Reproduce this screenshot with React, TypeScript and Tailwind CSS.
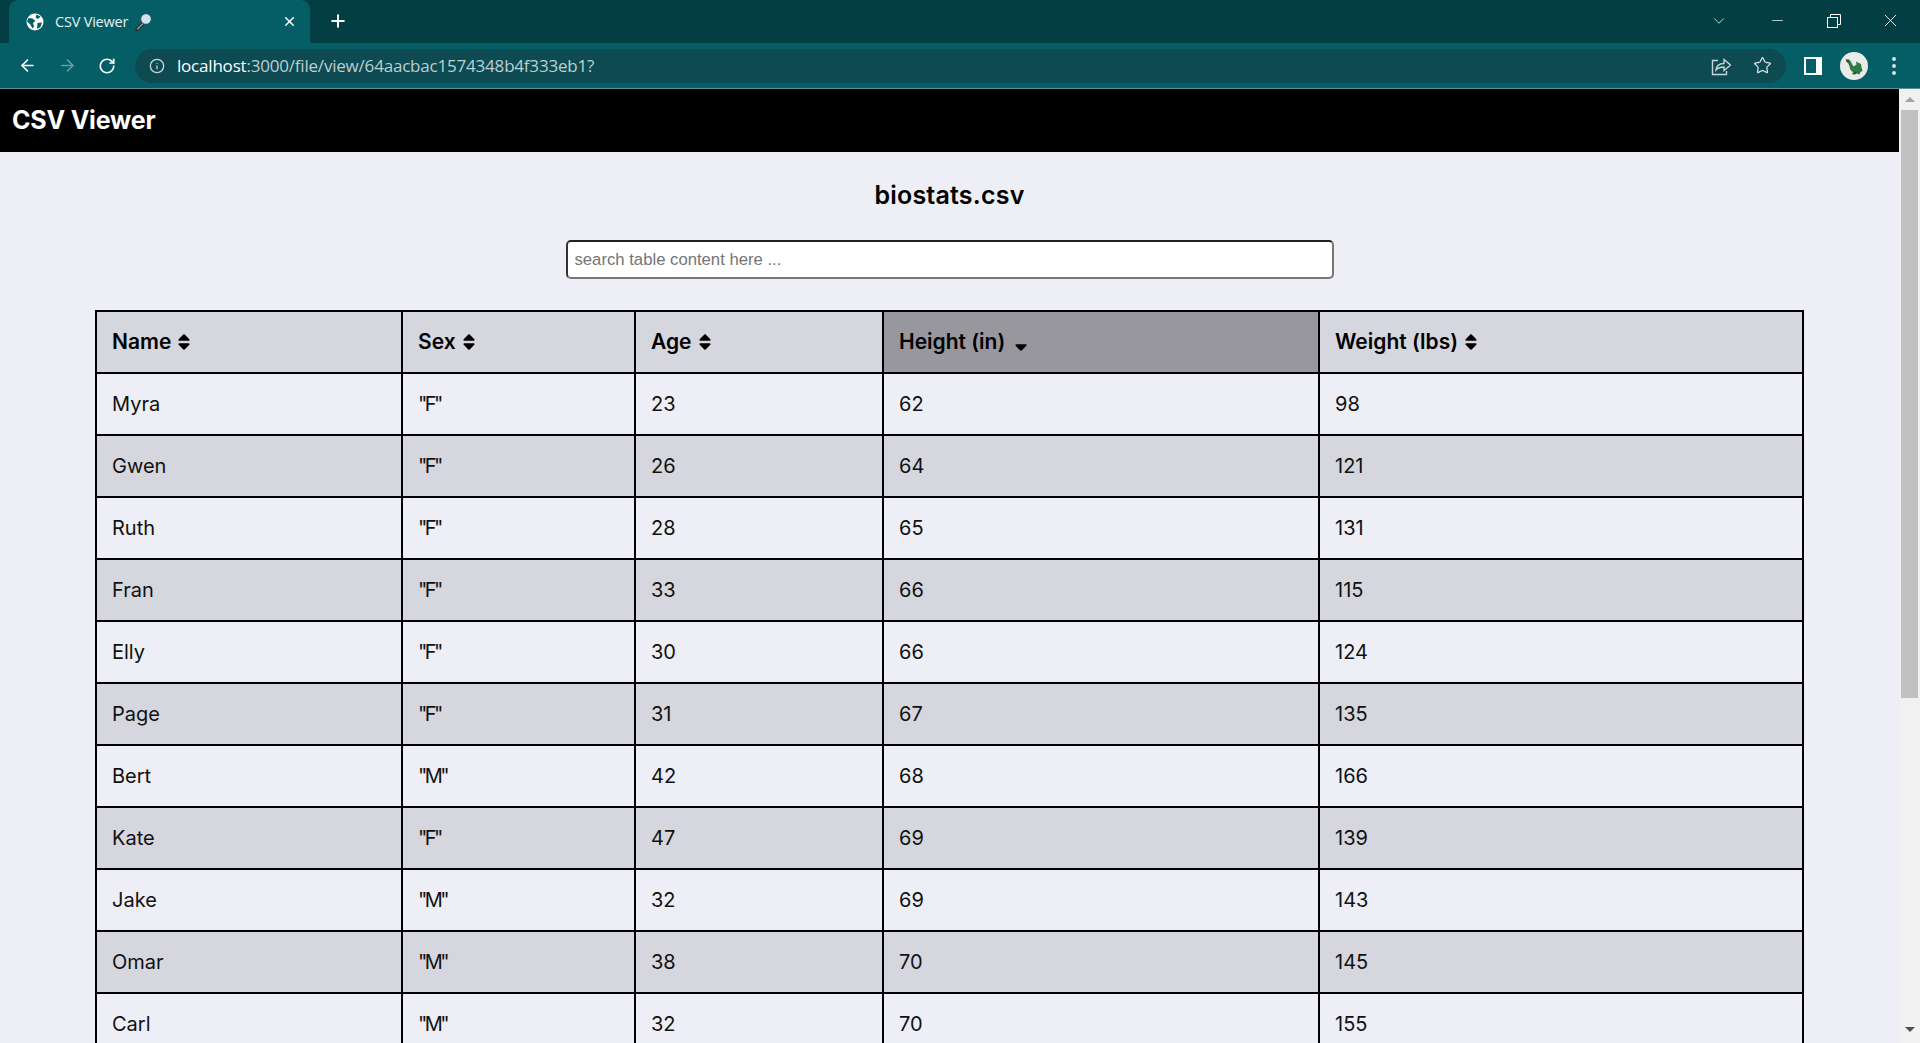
import React from "react";
import { ArrowLeft, ArrowRight, RotateCw, Info, Star, X, Plus, Minus, ChevronDown } from "lucide-react";
import { FaSort, FaSortDown } from "react-icons/fa";

const rows = [
  ["Myra", '"F"', "23", "62", "98"],
  ["Gwen", '"F"', "26", "64", "121"],
  ["Ruth", '"F"', "28", "65", "131"],
  ["Fran", '"F"', "33", "66", "115"],
  ["Elly", '"F"', "30", "66", "124"],
  ["Page", '"F"', "31", "67", "135"],
  ["Bert", '"M"', "42", "68", "166"],
  ["Kate", '"F"', "47", "69", "139"],
  ["Jake", '"M"', "32", "69", "143"],
  ["Omar", '"M"', "38", "70", "145"],
  ["Carl", '"M"', "32", "70", "155"],
];
const heads = ["Name", "Sex", "Age", "Height (in)", "Weight (lbs)"];

function Globe() {
  return (
    <svg width="18" height="18" viewBox="0 0 18 18">
      <circle cx="9" cy="9" r="8.500" fill="#fff" />
      <path d="M2.500 5l4 .5 3 2.500-2.500 2 1 3.500-1.500 2-2.500-4.500-3-2.500z M10.500 1.500l4 2-2.500 2.500-2.500-1.500z M11.500 10l4.500-.5-1.500 4.500-3.500 2z" fill="#055e66" />
    </svg>
  );
}

function Lens() {
  return (
    <svg width="17" height="18" viewBox="0 0 17 18">
      <path d="M8 10.500L2 16.500" stroke="#1c2b2e" strokeWidth="3.400" strokeLinecap="round" />
      <path d="M8 10.500L2.500 16" stroke="#9a9a8c" strokeWidth="1.600" strokeLinecap="round" />
      <circle cx="11" cy="6" r="5.300" fill="#cfe3ee" stroke="#2a4a50" strokeWidth="0.800" />
    </svg>
  );
}

function Share() {
  return (
    <svg width="20" height="20" viewBox="0 0 20 20" fill="none" stroke="#c4d6d8" strokeWidth="1.400">
      <path d="M7 4.500H1.500V18.500H15.500V15" />
      <path d="M5 14c.5-4 3.500-6.500 8-6.500V3.500l6.500 5.500-6.500 5.500v-3.500c-3.500 0-6 1-8 3z" />
    </svg>
  );
}

function Dragon() {
  return (
    <svg width="28" height="28" viewBox="0 0 28 28">
      <circle cx="14" cy="14" r="14" fill="#e8ece8" />
      <path d="M6 8l3-.5 1.500 1.500 3 5.500 3-2-.5-3 3 1.500 2 1 .5 3 1 4-2 1-1 2.500-3-1-2 1.500-1-2.500-3-2.500-1.500-5z" fill="#2f7a46" />
      <path d="M5.500 7.500l3 0 .5 2.500-2 .5z" fill="#3c4a3e" />
      <path d="M17 21l-4 1.500-1-1 3-2z" fill="#1f5a33" />
    </svg>
  );
}

function Restore() {
  return (
    <svg width="14" height="14" viewBox="0 0 14 14" fill="none" stroke="#fff" strokeWidth="1">
      <rect x="0.500" y="3.500" width="10" height="10" />
      <path d="M3.500 3.500V0.500H13.500V10.500H10.500" />
    </svg>
  );
}

export default function App() {
  return (
    <div className="flex h-screen w-full flex-col overflow-hidden bg-[#edeef6] font-['Inter','Liberation_Sans',sans-serif]">
      <div className="flex h-[43px] shrink-0 items-start bg-[#033e45] pl-[9px]">
        <div className="flex h-[43px] w-[301px] items-center rounded-t-[9px] bg-[#055e66] pl-[17px] pr-[13px] text-white">
          <Globe />
          <span className="ml-[11px] font-['Open_Sans',sans-serif] text-[14.500px] tracking-[-0.2px] text-[#e8f0f0]">CSV Viewer</span>
          <span className="ml-[7px]"><Lens /></span>
          <X size={15} strokeWidth={2.4} className="ml-auto" />
        </div>
        <div className="ml-[18px] mt-[11px] text-white"><Plus size={20} strokeWidth={2.4} /></div>
        <div className="ml-auto mt-[10px] flex items-center text-white">
          <ChevronDown size={18} strokeWidth={1} className="mr-[41px]" />
          <Minus size={17} strokeWidth={1} className="mr-[41px]" />
          <Restore />
          <X size={21} strokeWidth={1} className="ml-[39px] mr-[19px]" />
        </div>
      </div>
      <div className="flex h-[46px] shrink-0 items-center border-b border-[#5e8f94] bg-[#055e66] pl-[18px]">
        <ArrowLeft size={19} strokeWidth={2} className="text-white" />
        <ArrowRight size={19} strokeWidth={2} className="ml-[21px] text-[#6b9ca0]" />
        <RotateCw size={18} strokeWidth={2.2} className="ml-[21px] text-white" />
        <div className="ml-[19px] flex h-[34px] w-[1651px] items-center rounded-full bg-[#0d4a52] pl-[14px] pr-[14px] font-['Open_Sans',sans-serif] text-[17px] tracking-[-0.2px]">
          <Info size={16} className="text-[#c4d6d8]" />
          <span className="ml-[12px] text-white">localhost</span>
          <span className="text-[#bcd0d2]">:3000/file/view/64aacbac1574348b4f333eb1?</span>
          <span className="ml-auto"><Share /></span>
          <Star size={19} strokeWidth={1.6} className="ml-[22px] text-[#d5e2e3]" />
        </div>
        <div className="ml-[18px] h-[18px] w-[18px] border-[2px] border-r-[6px] border-white bg-[#055e66]" />
        <div className="ml-[18px]"><Dragon /></div>
        <div className="ml-[24px] flex flex-col gap-[3px]">
          <span className="h-[4px] w-[4px] rounded-full bg-[#d5e2e3]" />
          <span className="h-[4px] w-[4px] rounded-full bg-[#d5e2e3]" />
          <span className="h-[4px] w-[4px] rounded-full bg-[#d5e2e3]" />
        </div>
      </div>
      <div className="flex min-h-0 flex-1">
        <main className="min-w-0 flex-1 overflow-hidden">
          <header className="flex h-[63px] items-center bg-black pl-[12px] text-[25px] font-bold tracking-[-0.2px] text-white">CSV Viewer</header>
          <h1 className="mt-[27px] text-center text-[25px] font-semibold leading-[32px] tracking-[0.2px] text-black">biostats.csv</h1>
          <div className="mt-[29px] flex justify-center">
            <input
              readOnly
              placeholder="search table content here ..."
              className="h-[39px] w-[768px] rounded-[5px] border-2 border-b-[#767676] border-l-[#333] border-r-[#767676] border-t-[#222] bg-white px-[7px] font-['Liberation_Sans',sans-serif] text-[16.700px] placeholder:text-[#757575]"
            />
          </div>
          <div className="mt-[31px] px-[95px]">
            <table className="w-[1707px] table-fixed border-collapse text-[20px] text-[#111]">
              <colgroup>
                <col className="w-[306px]" />
                <col className="w-[233px]" />
                <col className="w-[248px]" />
                <col className="w-[436px]" />
                <col className="w-[484px]" />
              </colgroup>
              <thead>
                <tr className="h-[62px] bg-[#d5d6de]">
                  {heads.map((h, i) => (
                    <th key={h} className={`border-2 border-black pl-[15px] text-left text-[21px] font-semibold text-black ${i === 3 ? "bg-[#98979d]" : ""}`}>
                      <span className="inline-flex items-center gap-[3px]">
                        {h}
                        {i === 3 ? <FaSortDown size={20} className="ml-[3px] mt-[1px]" /> : <FaSort size={20} />}
                      </span>
                    </th>
                  ))}
                </tr>
              </thead>
              <tbody>
                {rows.map((r, ri) => (
                  <tr key={r[0]} className={`h-[62px] ${ri % 2 === 1 ? "bg-[#d5d6de]" : ""}`}>
                    {r.map((c, ci) => (
                      <td key={ci} className={`border-2 border-black pl-[15px] font-normal ${ci === 1 ? "tracking-[-2.600px]" : ""}`}>{c}</td>
                    ))}
                  </tr>
                ))}
              </tbody>
            </table>
          </div>
        </main>
        <aside className="flex w-[21px] shrink-0 flex-col items-center bg-[#f1f1f1]">
          <div className="flex h-[21px] w-full items-center justify-center">
            <span className="h-0 w-0 border-x-[5px] border-b-[5px] border-x-transparent border-b-[#a3a3a3]" />
          </div>
          <div className="h-[588px] w-[17px] bg-[#c1c1c1]" />
          <div className="mt-auto mb-[5px] flex h-[17px] w-full items-center justify-center">
            <span className="h-0 w-0 border-x-[5px] border-t-[5px] border-x-transparent border-t-[#505050]" />
          </div>
        </aside>
      </div>
    </div>
  );
}
